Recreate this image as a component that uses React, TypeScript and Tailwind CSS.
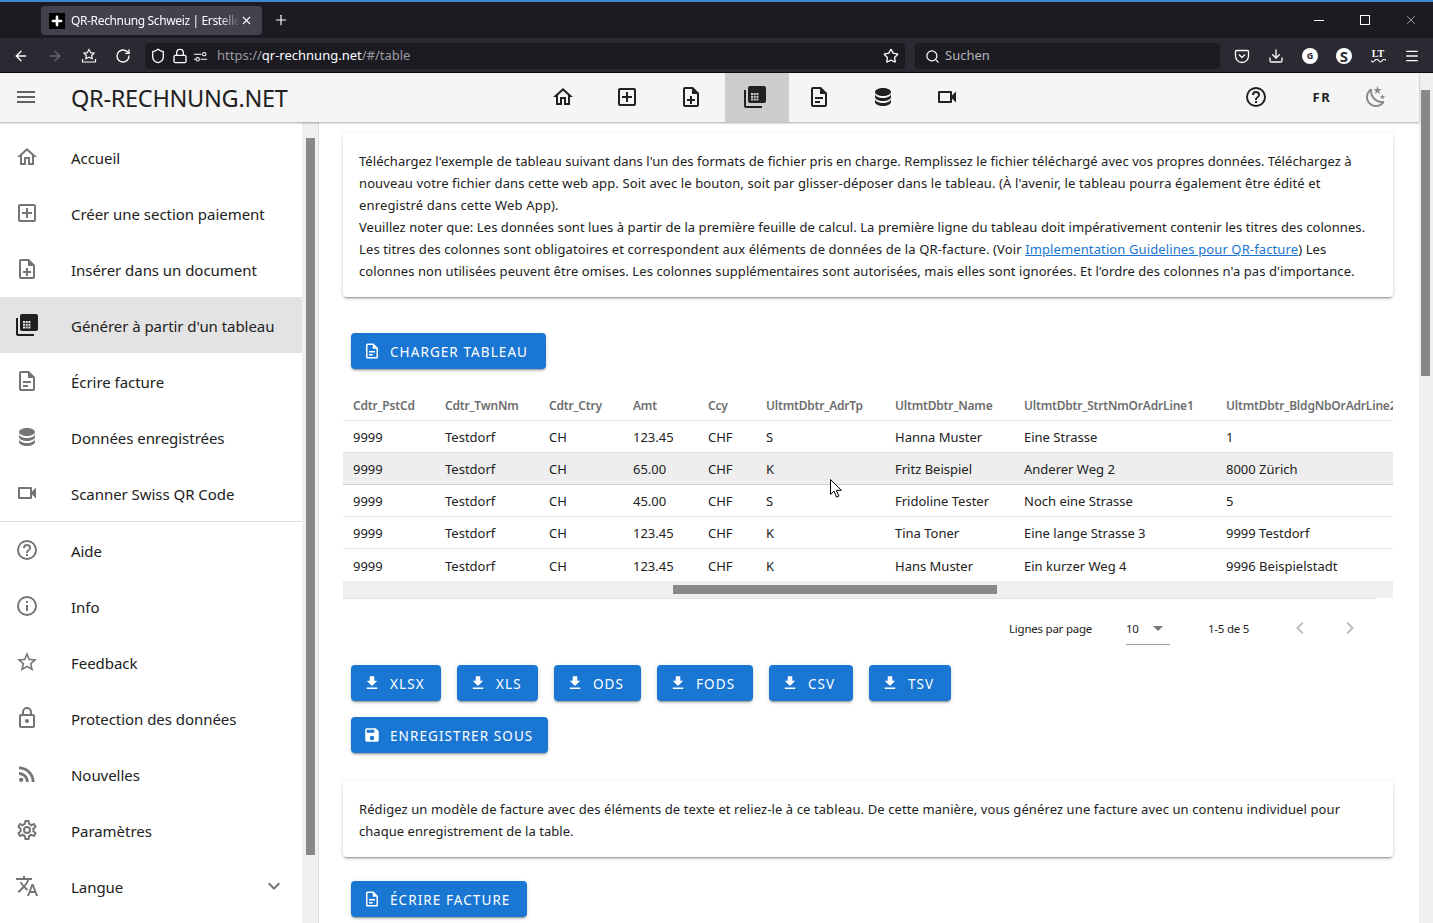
import type { ReactNode } from "react";
import { ArrowLeft, ArrowRight, Download, Lock, Menu, RotateCw, Search, Shield, Star, X, Plus } from "lucide-react";

const mdi = {
  menu: "M3,6H21V8H3V6M3,11H21V13H3V11M3,16H21V18H3V16Z",
  home: "M12 5.69L17 10.19V18H15V12H9V18H7V10.19L12 5.69M12 3L2 12H5V20H11V14H13V20H19V12H22L12 3Z",
  plusBox: "M19,19V5H5V19H19M19,3A2,2 0 0,1 21,5V19A2,2 0 0,1 19,21H5A2,2 0 0,1 3,19V5C3,3.89 3.9,3 5,3H19M11,7H13V11H17V13H13V17H11V13H7V11H11V7Z",
  filePlus: "M14 2H6C4.89 2 4 2.9 4 4V20C4 21.11 4.89 22 6 22H18C19.11 22 20 21.11 20 20V8L14 2M18 20H6V4H13V9H18V20M13 11V14H16V16H13V19H11V16H8V14H11V11H13Z",
  fileTable: "M3 5V21H19V23H3C1.9 23 1 22.1 1 21V5H3M21 1C22.1 1 23 1.9 23 3V16C23 17.1 22.1 18 21 18H7C5.9 18 5 17.1 5 16V3C5 1.9 5.9 1 7 1H21M8 8V10H10V8H8M10.7 8V10H12.7V8H10.7M13.4 8V10H15.4V8H13.4M8 10.8V12.8H10V10.8H8M10.7 10.8V12.8H12.7V10.8H10.7M13.4 10.8V12.8H15.4V10.8H13.4M8 13.6V15.6H10V13.6H8M10.7 13.6V15.6H12.7V13.6H10.7M13.4 13.6V15.6H15.4V13.6H13.4Z",
  fileDoc: "M6,2A2,2 0 0,0 4,4V20A2,2 0 0,0 6,22H18A2,2 0 0,0 20,20V8L14,2H6M6,4H13V9H18V20H6V4M8,12V14H16V12H8M8,16V18H13V16H8Z",
  database: "M12,3C7.58,3 4,4.79 4,7C4,9.21 7.58,11 12,11C16.42,11 20,9.21 20,7C20,4.79 16.42,3 12,3M4,9V12C4,14.21 7.58,16 12,16C16.42,16 20,14.21 20,12V9C20,11.21 16.42,13 12,13C7.58,13 4,11.21 4,9M4,14V17C4,19.21 7.58,21 12,21C16.42,21 20,19.21 20,17V14C20,16.21 16.42,18 12,18C7.58,18 4,16.21 4,14Z",
  video: "M15,8V16H5V8H15M16,6H4A1,1 0 0,0 3,7V17A1,1 0 0,0 4,18H16A1,1 0 0,0 17,17V13.5L21,17.5V6.5L17,10.5V7A1,1 0 0,0 16,6Z",
  help: "M11,18H13V16H11V18M12,2A10,10 0 0,0 2,12A10,10 0 0,0 12,22A10,10 0 0,0 22,12A10,10 0 0,0 12,2M12,20C7.59,20 4,16.41 4,12C4,7.59 7.59,4 12,4C16.41,4 20,7.59 20,12C20,16.41 16.41,20 12,20M12,6A4,4 0 0,0 8,10H10A2,2 0 0,1 12,8A2,2 0 0,1 14,10C14,12 11,11.75 11,15H13C13,12.75 16,12.5 16,10A4,4 0 0,0 12,6Z",
  info: "M11,9H13V7H11M12,20C7.59,20 4,16.41 4,12C4,7.59 7.59,4 12,4C16.41,4 20,7.59 20,12C20,16.41 16.41,20 12,20M12,2A10,10 0 0,0 2,12A10,10 0 0,0 12,22A10,10 0 0,0 22,12A10,10 0 0,0 12,2M11,17H13V11H11V17Z",
  star: "M12,15.39L8.24,17.66L9.23,13.38L5.91,10.5L10.29,10.13L12,6.09L13.71,10.13L18.09,10.5L14.77,13.38L15.76,17.66M22,9.24L14.81,8.63L12,2L9.19,8.63L2,9.24L7.45,13.97L5.82,21L12,17.27L18.18,21L16.54,13.97L22,9.24Z",
  lock: "M12,17C10.89,17 10,16.1 10,15C10,13.89 10.89,13 12,13A2,2 0 0,1 14,15A2,2 0 0,1 12,17M18,20V10H6V20H18M18,8A2,2 0 0,1 20,10V20A2,2 0 0,1 18,22H6C4.89,22 4,21.1 4,20V10C4,8.89 4.89,8 6,8H7V6A5,5 0 0,1 12,1A5,5 0 0,1 17,6V8H18M12,3A3,3 0 0,0 9,6V8H15V6A3,3 0 0,0 12,3Z",
  rss: "M6.18,15.64A2.18,2.18 0 0,1 8.36,17.82C8.36,19 7.38,20 6.18,20C5,20 4,19 4,17.82A2.18,2.18 0 0,1 6.18,15.64M4,4.44A15.56,15.56 0 0,1 19.56,20H16.73A12.73,12.73 0 0,0 4,7.27V4.44M4,10.1A9.9,9.9 0 0,1 13.9,20H11.07A7.07,7.07 0 0,0 4,12.93V10.1Z",
  cog: "M12,8A4,4 0 0,1 16,12A4,4 0 0,1 12,16A4,4 0 0,1 8,12A4,4 0 0,1 12,8M12,10A2,2 0 0,0 10,12A2,2 0 0,0 12,14A2,2 0 0,0 14,12A2,2 0 0,0 12,10M10,22C9.75,22 9.54,21.82 9.5,21.58L9.13,18.93C8.5,18.68 7.96,18.34 7.44,17.94L4.95,18.95C4.73,19.03 4.46,18.95 4.34,18.73L2.34,15.27C2.21,15.05 2.27,14.78 2.46,14.63L4.57,12.97L4.5,12L4.57,11L2.46,9.37C2.27,9.22 2.21,8.95 2.34,8.73L4.34,5.27C4.46,5.05 4.73,4.96 4.95,5.05L7.44,6.05C7.96,5.66 8.5,5.32 9.13,5.07L9.5,2.42C9.54,2.18 9.75,2 10,2H14C14.25,2 14.46,2.18 14.5,2.42L14.87,5.07C15.5,5.32 16.04,5.66 16.56,6.05L19.05,5.05C19.27,4.96 19.54,5.05 19.66,5.27L21.66,8.73C21.79,8.95 21.73,9.22 21.54,9.37L19.43,11L19.5,12L19.43,13L21.54,14.63C21.73,14.78 21.79,15.05 21.66,15.27L19.66,18.73C19.54,18.95 19.27,19.04 19.05,18.95L16.56,17.95C16.04,18.34 15.5,18.68 14.87,18.93L14.5,21.58C14.46,21.82 14.25,22 14,22H10M11.25,4L10.88,6.61C9.68,6.86 8.62,7.5 7.85,8.39L5.44,7.35L4.69,8.65L6.8,10.2C6.4,11.37 6.4,12.64 6.8,13.8L4.68,15.36L5.43,16.66L7.86,15.62C8.63,16.5 9.68,17.14 10.87,17.38L11.24,20H12.76L13.13,17.39C14.32,17.14 15.37,16.5 16.14,15.62L18.57,16.66L19.32,15.36L17.2,13.81C17.6,12.64 17.6,11.37 17.2,10.2L19.31,8.65L18.56,7.35L16.15,8.39C15.38,7.5 14.32,6.86 13.12,6.62L12.75,4H11.25Z",
  translate: "M12.87,15.07L10.33,12.56L10.36,12.53C12.1,10.59 13.34,8.36 14.07,6H17V4H10V2H8V4H1V6H12.17C11.5,7.92 10.44,9.75 9,11.35C8.07,10.32 7.3,9.19 6.69,8H4.69C5.42,9.63 6.42,11.17 7.67,12.56L2.58,17.58L4,19L9,14L12.11,17.11L12.87,15.07M18.5,10H16.5L12,22H14L15.12,19H19.87L21,22H23L18.5,10M15.88,17L17.5,12.67L19.12,17H15.88Z",
  chevronDown: "M7.41,8.58L12,13.17L16.59,8.58L18,10L12,16L6,10L7.41,8.58Z",
  chevronLeft: "M15.41,16.58L10.83,12L15.41,7.41L14,6L8,12L14,18L15.41,16.58Z",
  chevronRight: "M8.59,16.58L13.17,12L8.59,7.41L10,6L16,12L10,18L8.59,16.58Z",
  menuDown: "M7,10L12,15L17,10H7Z",
  night: "M17.75,4.09L15.22,6.03L16.13,9.09L13.5,7.28L10.87,9.09L11.78,6.03L9.25,4.09L12.44,4L13.5,1L14.56,4L17.75,4.09M21.25,11L19.61,12.25L20.2,14.23L18.5,13.06L16.8,14.23L17.39,12.25L15.75,11L17.81,10.95L18.5,9L19.19,10.95L21.25,11M18.97,15.95C19.8,15.87 20.69,17.05 20.16,17.8C19.84,18.25 19.5,18.67 19.08,19.07C15.17,23 8.84,23 4.94,19.07C1.03,15.17 1.03,8.83 4.94,4.93C5.34,4.53 5.76,4.17 6.21,3.85C6.96,3.32 8.14,4.21 8.06,5.04C7.79,7.9 8.75,10.87 10.95,13.06C13.14,15.26 16.1,16.22 18.97,15.95M17.33,17.97C14.5,17.81 11.7,16.64 9.53,14.5C7.36,12.31 6.2,9.5 6.04,6.68C3.23,9.82 3.34,14.64 6.35,17.66C9.37,20.67 14.19,20.78 17.33,17.97Z",
  download: "M5,20H19V18H5M19,9H15V3H9V9H5L12,16L19,9Z",
  save: "M15,9H5V5H15M12,19A3,3 0 0,1 9,16A3,3 0 0,1 12,13A3,3 0 0,1 15,16A3,3 0 0,1 12,19M17,3H5C3.89,3 3,3.9 3,5V19A2,2 0 0,0 5,21H19A2,2 0 0,0 21,19V7L17,3Z",
};

function Icon({ d, className }: { d: string; className: string }) {
  return (
    <svg viewBox="0 0 24 24" className={className} fill="currentColor" fillRule="evenodd">
      <path d={d} />
    </svg>
  );
}

const topNav = [mdi.home, mdi.plusBox, mdi.filePlus, mdi.fileTable, mdi.fileDoc, mdi.database, mdi.video];

const menuTop = [
  { icon: mdi.home, label: "Accueil" },
  { icon: mdi.plusBox, label: "Créer une section paiement" },
  { icon: mdi.filePlus, label: "Insérer dans un document" },
  { icon: mdi.fileTable, label: "Générer à partir d'un tableau", active: true },
  { icon: mdi.fileDoc, label: "Écrire facture" },
  { icon: mdi.database, label: "Données enregistrées" },
  { icon: mdi.video, label: "Scanner Swiss QR Code" },
];

const menuBottom = [
  { icon: mdi.help, label: "Aide" },
  { icon: mdi.info, label: "Info" },
  { icon: mdi.star, label: "Feedback" },
  { icon: mdi.lock, label: "Protection des données" },
  { icon: mdi.rss, label: "Nouvelles" },
  { icon: mdi.cog, label: "Paramètres" },
  { icon: mdi.translate, label: "Langue", chevron: true },
];

const headers = ["Cdtr_PstCd", "Cdtr_TwnNm", "Cdtr_Ctry", "Amt", "Ccy", "UltmtDbtr_AdrTp", "UltmtDbtr_Name", "UltmtDbtr_StrtNmOrAdrLine1", "UltmtDbtr_BldgNbOrAdrLine2"];

const rows = [
  ["9999", "Testdorf", "CH", "123.45", "CHF", "S", "Hanna Muster", "Eine Strasse", "1"],
  ["9999", "Testdorf", "CH", "65.00", "CHF", "K", "Fritz Beispiel", "Anderer Weg 2", "8000 Zürich"],
  ["9999", "Testdorf", "CH", "45.00", "CHF", "S", "Fridoline Tester", "Noch eine Strasse", "5"],
  ["9999", "Testdorf", "CH", "123.45", "CHF", "K", "Tina Toner", "Eine lange Strasse 3", "9999 Testdorf"],
  ["9999", "Testdorf", "CH", "123.45", "CHF", "K", "Hans Muster", "Ein kurzer Weg 4", "9996 Beispielstadt"],
];

const downloads = [
  { label: "XLSX", w: "w-[90px]" },
  { label: "XLS", w: "w-[81px]" },
  { label: "ODS", w: "w-[87px]" },
  { label: "FODS", w: "w-[96px]" },
  { label: "CSV", w: "w-[84px]" },
  { label: "TSV", w: "w-[82px]" },
];

const gridCols = "grid grid-cols-[92px_104px_84px_75px_58px_129px_129px_202px_170px] pl-[10px]";

function Btn({ icon, label, w }: { icon: string; label: string; w: string }) {
  return (
    <button className={`${w} h-9 shrink-0 rounded bg-[#1976d2] text-white flex items-center pl-[12px] gap-[9px] text-[13.5px] tracking-[0.08em] shadow-[0_3px_1px_-2px_rgba(0,0,0,.2),0_2px_2px_0_rgba(0,0,0,.14),0_1px_5px_0_rgba(0,0,0,.12)] whitespace-nowrap`}>
      <Icon d={icon} className="w-[18px] h-[18px]" />
      <span className="pt-[2px]">{label}</span>
    </button>
  );
}

function Card({ children }: { children: ReactNode }) {
  return (
    <div className="bg-white rounded px-4 pt-[17px] pb-[15px] text-[13px] leading-[22px] text-[#212121] whitespace-nowrap shadow-[0_3px_1px_-2px_rgba(0,0,0,.2),0_2px_2px_0_rgba(0,0,0,.14),0_1px_5px_0_rgba(0,0,0,.12)]">
      {children}
    </div>
  );
}

function ToolBtn({ children }: { children: ReactNode }) {
  return <div className="w-[34px] h-full flex items-center justify-center shrink-0">{children}</div>;
}

function SideItem({ icon, label, active, chevron }: { icon: string; label: string; active?: boolean; chevron?: boolean }) {
  return (
    <div className={`h-14 flex items-center pl-[15px] pr-[16px] ${active ? "bg-[#e3e3e3]" : ""}`}>
      <Icon d={icon} className={`w-6 h-6 shrink-0 ${active ? "text-[#1f1f1f]" : "text-[#757575]"}`} />
      <span className="ml-8 pt-[2px] text-[15px] text-[#212121] whitespace-nowrap tracking-[-0.003em]">{label}</span>
      {chevron && <Icon d={mdi.chevronDown} className="w-6 h-6 ml-auto text-[#757575]" />}
    </div>
  );
}

export default function App() {
  return (
    <div className="relative h-[923px] w-[1433px] overflow-hidden flex flex-col bg-white font-['Noto_Sans','Open_Sans',sans-serif]">
      {/* browser tab strip */}
      <div className="h-[38px] shrink-0 bg-[#1c1b22] border-t-2 border-[#3f86d0] flex items-center pl-[41px] text-[#fbfbfe]">
        <div className="w-[221px] h-[29px] rounded bg-[#42414d] flex items-center pl-2 mt-[1px]">
          <div className="w-4 h-4 bg-black flex items-center justify-center shrink-0">
            <Plus className="w-[14px] h-[14px]" strokeWidth={4.5} />
          </div>
          <span className="ml-[6px] w-[169px] overflow-hidden whitespace-nowrap text-[12px] tracking-[-0.03em] [mask-image:linear-gradient(to_right,#000_88%,transparent)]">QR-Rechnung Schweiz | Erstelle</span>
          <X className="w-[13px] h-[13px] shrink-0" />
        </div>
        <Plus className="w-4 h-4 ml-[11px]" strokeWidth={1.75} />
        <div className="ml-auto flex items-center">
          <div className="w-[46px] flex justify-center"><div className="w-[10px] h-px bg-white" /></div>
          <div className="w-[46px] flex justify-center"><div className="w-[10px] h-[10px] border border-white" /></div>
          <div className="w-[44px] ml-[1px] flex justify-center"><X className="w-[14px] h-[14px]" strokeWidth={1} /></div>
        </div>
      </div>
      {/* browser toolbar */}
      <div className="h-[35px] shrink-0 bg-[#2b2a33] border-b border-[#0c0c0d] flex items-center pl-[4px] pt-[2px] text-[#fbfbfe]">
        <ToolBtn><ArrowLeft className="w-4 h-4" /></ToolBtn>
        <ToolBtn><ArrowRight className="w-4 h-4 text-[#6d6c75]" /></ToolBtn>
        <ToolBtn>
          <svg viewBox="0 0 16 16" className="w-4 h-4" fill="none" stroke="currentColor" strokeWidth="1.2">
            <path d="M8 1.5l1.7 3.2 3.3.5-2.4 2.3.6 3.2L8 9.2l-3.2 1.5.6-3.2L3 5.2l3.3-.5z" />
            <path d="M1.5 11v3h13v-3" />
          </svg>
        </ToolBtn>
        <ToolBtn><RotateCw className="w-4 h-4" /></ToolBtn>
        <div className="ml-[5px] w-[760px] h-[26px] rounded bg-[#1c1b22] flex items-center pl-[4px]">
          <Shield className="w-4 h-4 ml-[1px]" />
          <Lock className="w-4 h-4 ml-[6px]" />
          <svg viewBox="0 0 16 16" className="w-[15px] h-[15px] ml-[5px]" fill="none" stroke="currentColor" strokeWidth="1.1">
            <path d="M1 5.5h8M1 11h2M8 11h7" />
            <circle cx="12" cy="5.5" r="1.8" />
            <circle cx="5" cy="11" r="1.8" />
          </svg>
          <span className="ml-[9px] text-[13px] text-[#9a9aa2] whitespace-nowrap">
            https://<span className="text-[#fbfbfe]">qr-rechnung.net</span>/#/table
          </span>
          <Star className="w-4 h-4 ml-auto mr-[6px]" />
        </div>
        <div className="ml-[10px] w-[305px] h-[26px] rounded bg-[#1c1b22] flex items-center pl-[10px]">
          <Search className="w-[15px] h-[15px]" />
          <span className="ml-[5px] text-[13px] text-[#b5b5ba]">Suchen</span>
        </div>
        <div className="ml-[5px] flex h-full">
          <ToolBtn>
            <svg viewBox="0 0 16 16" className="w-4 h-4" fill="none" stroke="currentColor" strokeWidth="1.3">
              <path d="M2.5 2.5h11a1 1 0 0 1 1 1V8a6.5 6.5 0 0 1-13 0V3.5a1 1 0 0 1 1-1z" />
              <path d="M5 6.5l3 3 3-3" />
            </svg>
          </ToolBtn>
          <ToolBtn><Download className="w-4 h-4" /></ToolBtn>
          <ToolBtn><div className="w-4 h-4 rounded-full bg-white text-[#2b2a33] text-[9px] font-bold flex items-center justify-center">G</div></ToolBtn>
          <ToolBtn><div className="w-4 h-4 rounded-full bg-white text-[#2b2a33] text-[15px] font-bold flex items-center justify-center">S</div></ToolBtn>
          <ToolBtn>
            <div className="flex flex-col items-center leading-none">
              <span className="text-[10px] font-bold h-[10px] leading-[10px] font-['Liberation_Serif',serif]">LT</span>
              <svg viewBox="0 0 16 4" className="w-[15px] h-[4px]" fill="none" stroke="currentColor" strokeWidth="1.2"><path d="M0 1.5q2 3 4 0t4 0 4 0 4 0" /></svg>
            </div>
          </ToolBtn>
          <ToolBtn><Menu className="w-4 h-4" /></ToolBtn>
        </div>
      </div>

      <div className="flex-1 flex min-h-0">
        <div className="w-[1419px] flex flex-col min-h-0">
          {/* app bar */}
          <div className="relative z-10 h-[49px] shrink-0 bg-[#f5f5f5] flex items-center pl-[14px] shadow-[0_1px_2px_rgba(0,0,0,.35)]">
            <Icon d={mdi.menu} className="w-6 h-6 mb-[2px] text-[#616161]" />
            <div className="ml-[33px] mt-[2px] w-[462px] text-[23.5px] text-[#212121] whitespace-nowrap tracking-[-0.012em]">QR-RECHNUNG.NET</div>
            <div className="flex h-full">
              {topNav.map((d, i) => (
                <div key={i} className={`w-16 h-full flex items-center justify-center pr-[4px] ${i === 3 ? "bg-[#cdcdcd]" : ""}`}>
                  <Icon d={d} className="w-6 h-6 mb-[2px] text-[#212121]" />
                </div>
              ))}
            </div>
            <div className="ml-[245px] w-[60px] flex justify-center"><Icon d={mdi.help} className="w-6 h-6 mb-[2px] text-[#212121]" /></div>
            <div className="ml-[6px] w-[60px] text-center text-[13px] font-bold tracking-[0.12em] text-[#212121]">FR</div>
            <div className="w-[48px] flex justify-center"><Icon d={mdi.night} className="w-6 h-6 mb-[2px] text-[#8a8a8a]" /></div>
          </div>

          <div className="flex-1 flex min-h-0">
            {/* sidebar */}
            <div className="w-[319px] shrink-0 flex border-r border-[#dcdcdc]">
              <div className="w-[302px] pt-[7px]">
                {menuTop.map((m) => <SideItem key={m.label} {...m} />)}
                <div className="h-px bg-[#dfdfdf] mt-[-1px] mb-[1px] relative top-[1px]" />
                {menuBottom.map((m) => <SideItem key={m.label} {...m} />)}
              </div>
              <div className="w-[16px] bg-[#f0f0f0] pt-[16px] pl-[4px]">
                <div className="w-[9px] h-[717px] bg-[#888888]" />
              </div>
            </div>

            {/* main content */}
            <div className="flex-1 pl-6 pr-[26px] pt-[11px] overflow-hidden">
              <Card>
                <div className="tracking-[0.0035em]">Téléchargez l'exemple de tableau suivant dans l'un des formats de fichier pris en charge. Remplissez le fichier téléchargé avec vos propres données. Téléchargez à</div>
                <div className="tracking-[0.0085em]">nouveau votre fichier dans cette web app. Soit avec le bouton, soit par glisser-déposer dans le tableau. (À l'avenir, le tableau pourra également être édité et</div>
                <div className="tracking-[0.0125em]">enregistré dans cette Web App).</div>
                <div className="tracking-[0.005em]">Veuillez noter que: Les données sont lues à partir de la première feuille de calcul. La première ligne du tableau doit impérativement contenir les titres des colonnes.</div>
                <div className="tracking-[0.009em]">Les titres des colonnes sont obligatoires et correspondent aux éléments de données de la QR-facture. (Voir <span className="text-[#1976d2] underline">Implementation Guidelines pour QR-facture</span>) Les</div>
                <div className="tracking-[0.0055em]">colonnes non utilisées peuvent être omises. Les colonnes supplémentaires sont autorisées, mais elles sont ignorées. Et l'ordre des colonnes n'a pas d'importance.</div>
              </Card>

              <div className="mt-9 ml-2">
                <Btn icon={mdi.fileDoc} label="CHARGER TABLEAU" w="w-[195px]" />
              </div>

              {/* data table */}
              <div className="mt-5 overflow-hidden">
                <div className={`${gridCols} h-8 pt-[2px] items-center border-b border-[#e0e0e0] text-[12px] font-semibold text-[#6e6e6e] whitespace-nowrap tracking-[-0.016em]`}>
                  {headers.map((h) => <div key={h}>{h}</div>)}
                </div>
                {rows.map((r, i) => (
                  <div key={i} className={`${gridCols} h-8 items-center text-[13px] text-[#212121] whitespace-nowrap ${i === 4 ? "pt-1" : "pt-[2px]"} ${i === 1 ? "bg-[#eeeeee] border-b border-[#d0d0d0]" : i < 4 ? "border-b border-[#e0e0e0]" : ""}`}>
                    {r.map((c, j) => <div key={j}>{c}</div>)}
                  </div>
                ))}
                <div className="h-[17px] bg-[#efefef] pt-1 pl-[330px]">
                  <div className="w-[324px] h-[9px] bg-[#888888]" />
                </div>
                <div className="h-px w-[1033px] bg-[#e0e0e0]" />
              </div>

              {/* pagination */}
              <div className="h-[58px] flex items-center text-[11.5px] tracking-[-0.02em] text-[#212121] pl-[666px]">
                <span className="w-[117px] pt-[2px] whitespace-nowrap">Lignes par page</span>
                <div className="w-11 h-[34px] border-b border-[#9e9e9e] flex items-center">
                  <span className="pt-[2px]">10</span>
                  <Icon d={mdi.menuDown} className="w-6 h-6 ml-[7px] text-[#757575]" />
                </div>
                <span className="ml-[38px] w-[80px] pt-[2px] whitespace-nowrap">1-5 de 5</span>
                <Icon d={mdi.chevronLeft} className="w-6 h-6 text-[#bdbdbd]" />
                <Icon d={mdi.chevronRight} className="w-6 h-6 ml-[26px] text-[#bdbdbd]" />
              </div>

              <div className="mt-2 ml-2 flex flex-wrap gap-4">
                {downloads.map((b) => <Btn key={b.label} icon={mdi.download} label={b.label} w={b.w} />)}
                <div className="w-full">
                  <Btn icon={mdi.save} label="ENREGISTRER SOUS" w="w-[197px]" />
                </div>
              </div>

              <div className="mt-7">
                <Card>
                  <div className="tracking-[0.0075em]">Rédigez un modèle de facture avec des éléments de texte et reliez-le à ce tableau. De cette manière, vous générez une facture avec un contenu individuel pour</div>
                  <div className="tracking-[0.003em]">chaque enregistrement de la table.</div>
                </Card>
              </div>

              <div className="mt-6 ml-2">
                <Btn icon={mdi.fileDoc} label="ÉCRIRE FACTURE" w="w-[176px]" />
              </div>
            </div>
          </div>
        </div>
        {/* page scrollbar */}
        <div className="w-[14px] bg-[#f0f0f0] pt-[17px] pl-[2px]">
          <div className="w-[9px] h-[286px] bg-[#888888]" />
        </div>
      </div>

      {/* mouse pointer */}
      <svg viewBox="0 0 14 20" className="absolute left-[830px] top-[479px] w-[14px] h-5 z-20" fill="#fff" stroke="#000" strokeWidth="1">
        <path d="M.5.5v15l3.6-3.4 2.4 6 2.4-1-2.5-5.8h5z" />
      </svg>
    </div>
  );
}
